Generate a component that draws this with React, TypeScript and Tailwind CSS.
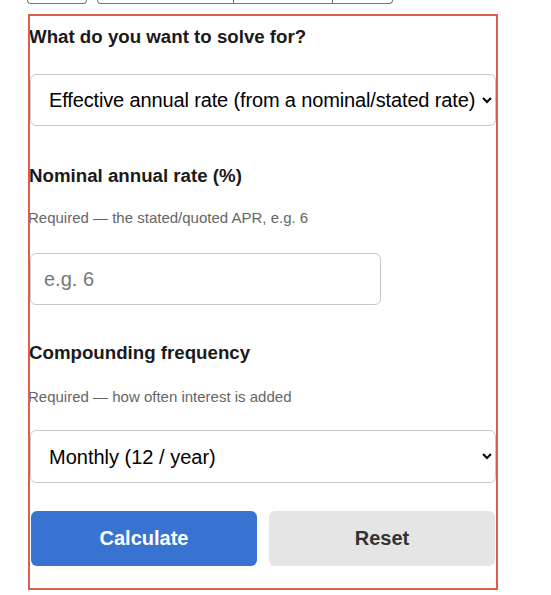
import { useState } from 'react'

const font = { fontFamily: '"Liberation Sans", Arial, sans-serif' }

function App() {
  const [solveFor, setSolveFor] = useState('ear')
  const [rate, setRate] = useState('')
  const [freq, setFreq] = useState('12')

  return (
    <div className="min-h-screen bg-white text-[#1a1a1a]" style={font}>
      {/* Tabs above, cut off by the viewport */}
      <div className="flex h-[4px] gap-[10px] pl-[27px]">
        <div className="h-[4px] w-[60px] rounded-b-[4px] border-x border-b border-[#767676]" />
        <div className="flex h-[4px] w-[296px] rounded-b-[4px] border-x border-b border-[#767676]">
          <div className="w-[136px] border-r border-[#767676]" />
          <div className="w-[99px] border-r border-[#767676]" />
        </div>
      </div>

      <form
        className="mt-[12px] ml-[30px] w-[466px] pt-[9.5px] pb-[22px] outline-2 outline-[#d9604a]"
        onSubmit={(e) => e.preventDefault()}
      >
        {/* Solve for */}
        <label className="-ml-px block text-[18.7px] leading-[22px] font-bold">What do you want to solve for?</label>
        <select
          value={solveFor}
          onChange={(e) => setSolveFor(e.target.value)}
          className="mt-[26.5px] block h-[52px] w-full rounded-[6px] border border-[#c8c8c8] bg-white pl-[14px] pr-[2px] text-[20px] tracking-[-0.14px] text-black"
        >
          <option value="ear">Effective annual rate (from a nominal/stated rate)</option>
          <option value="nominal">Nominal rate (from an effective annual rate)</option>
        </select>

        {/* Nominal rate */}
        <label className="-ml-px mt-[38.5px] block text-[18.7px] leading-[22px] font-bold">Nominal annual rate (%)</label>
        <p className="-ml-[2px] mt-[21.5px] text-[15px] leading-[20px] text-[#666]">
          Required — the stated/quoted APR, e.g. 6
        </p>
        <input
          value={rate}
          onChange={(e) => setRate(e.target.value)}
          placeholder="e.g. 6"
          className="mt-[25px] block h-[52px] w-[351px] rounded-[6px] border border-[#c8c8c8] px-[13px] text-[20px] placeholder:text-[#777] focus:outline-none"
        />

        {/* Compounding */}
        <label className="-ml-px mt-[37px] block text-[18.7px] leading-[22px] font-bold">Compounding frequency</label>
        <p className="-ml-[2px] mt-[22.5px] text-[15px] leading-[20px] text-[#666]">
          Required — how often interest is added
        </p>
        <select
          value={freq}
          onChange={(e) => setFreq(e.target.value)}
          className="mt-[23.5px] block h-[53px] w-full rounded-[6px] border border-[#c8c8c8] bg-white px-[14px] text-[20px] text-black"
        >
          <option value="1">Annually (1 / year)</option>
          <option value="4">Quarterly (4 / year)</option>
          <option value="12">Monthly (12 / year)</option>
          <option value="365">Daily (365 / year)</option>
        </select>

        {/* Actions */}
        <div className="mt-[28px] flex gap-3 px-px">
          <button type="submit" className="h-[55px] flex-1 rounded-[6px] bg-[#3873d1] pb-px text-[20px] font-bold text-white">
            Calculate
          </button>
          <button
            type="button"
            onClick={() => setRate('')}
            className="h-[55px] flex-1 rounded-[6px] bg-[#e5e5e5] pb-px text-[20px] font-bold text-[#333]"
          >
            Reset
          </button>
        </div>
      </form>
    </div>
  )
}

export default App
